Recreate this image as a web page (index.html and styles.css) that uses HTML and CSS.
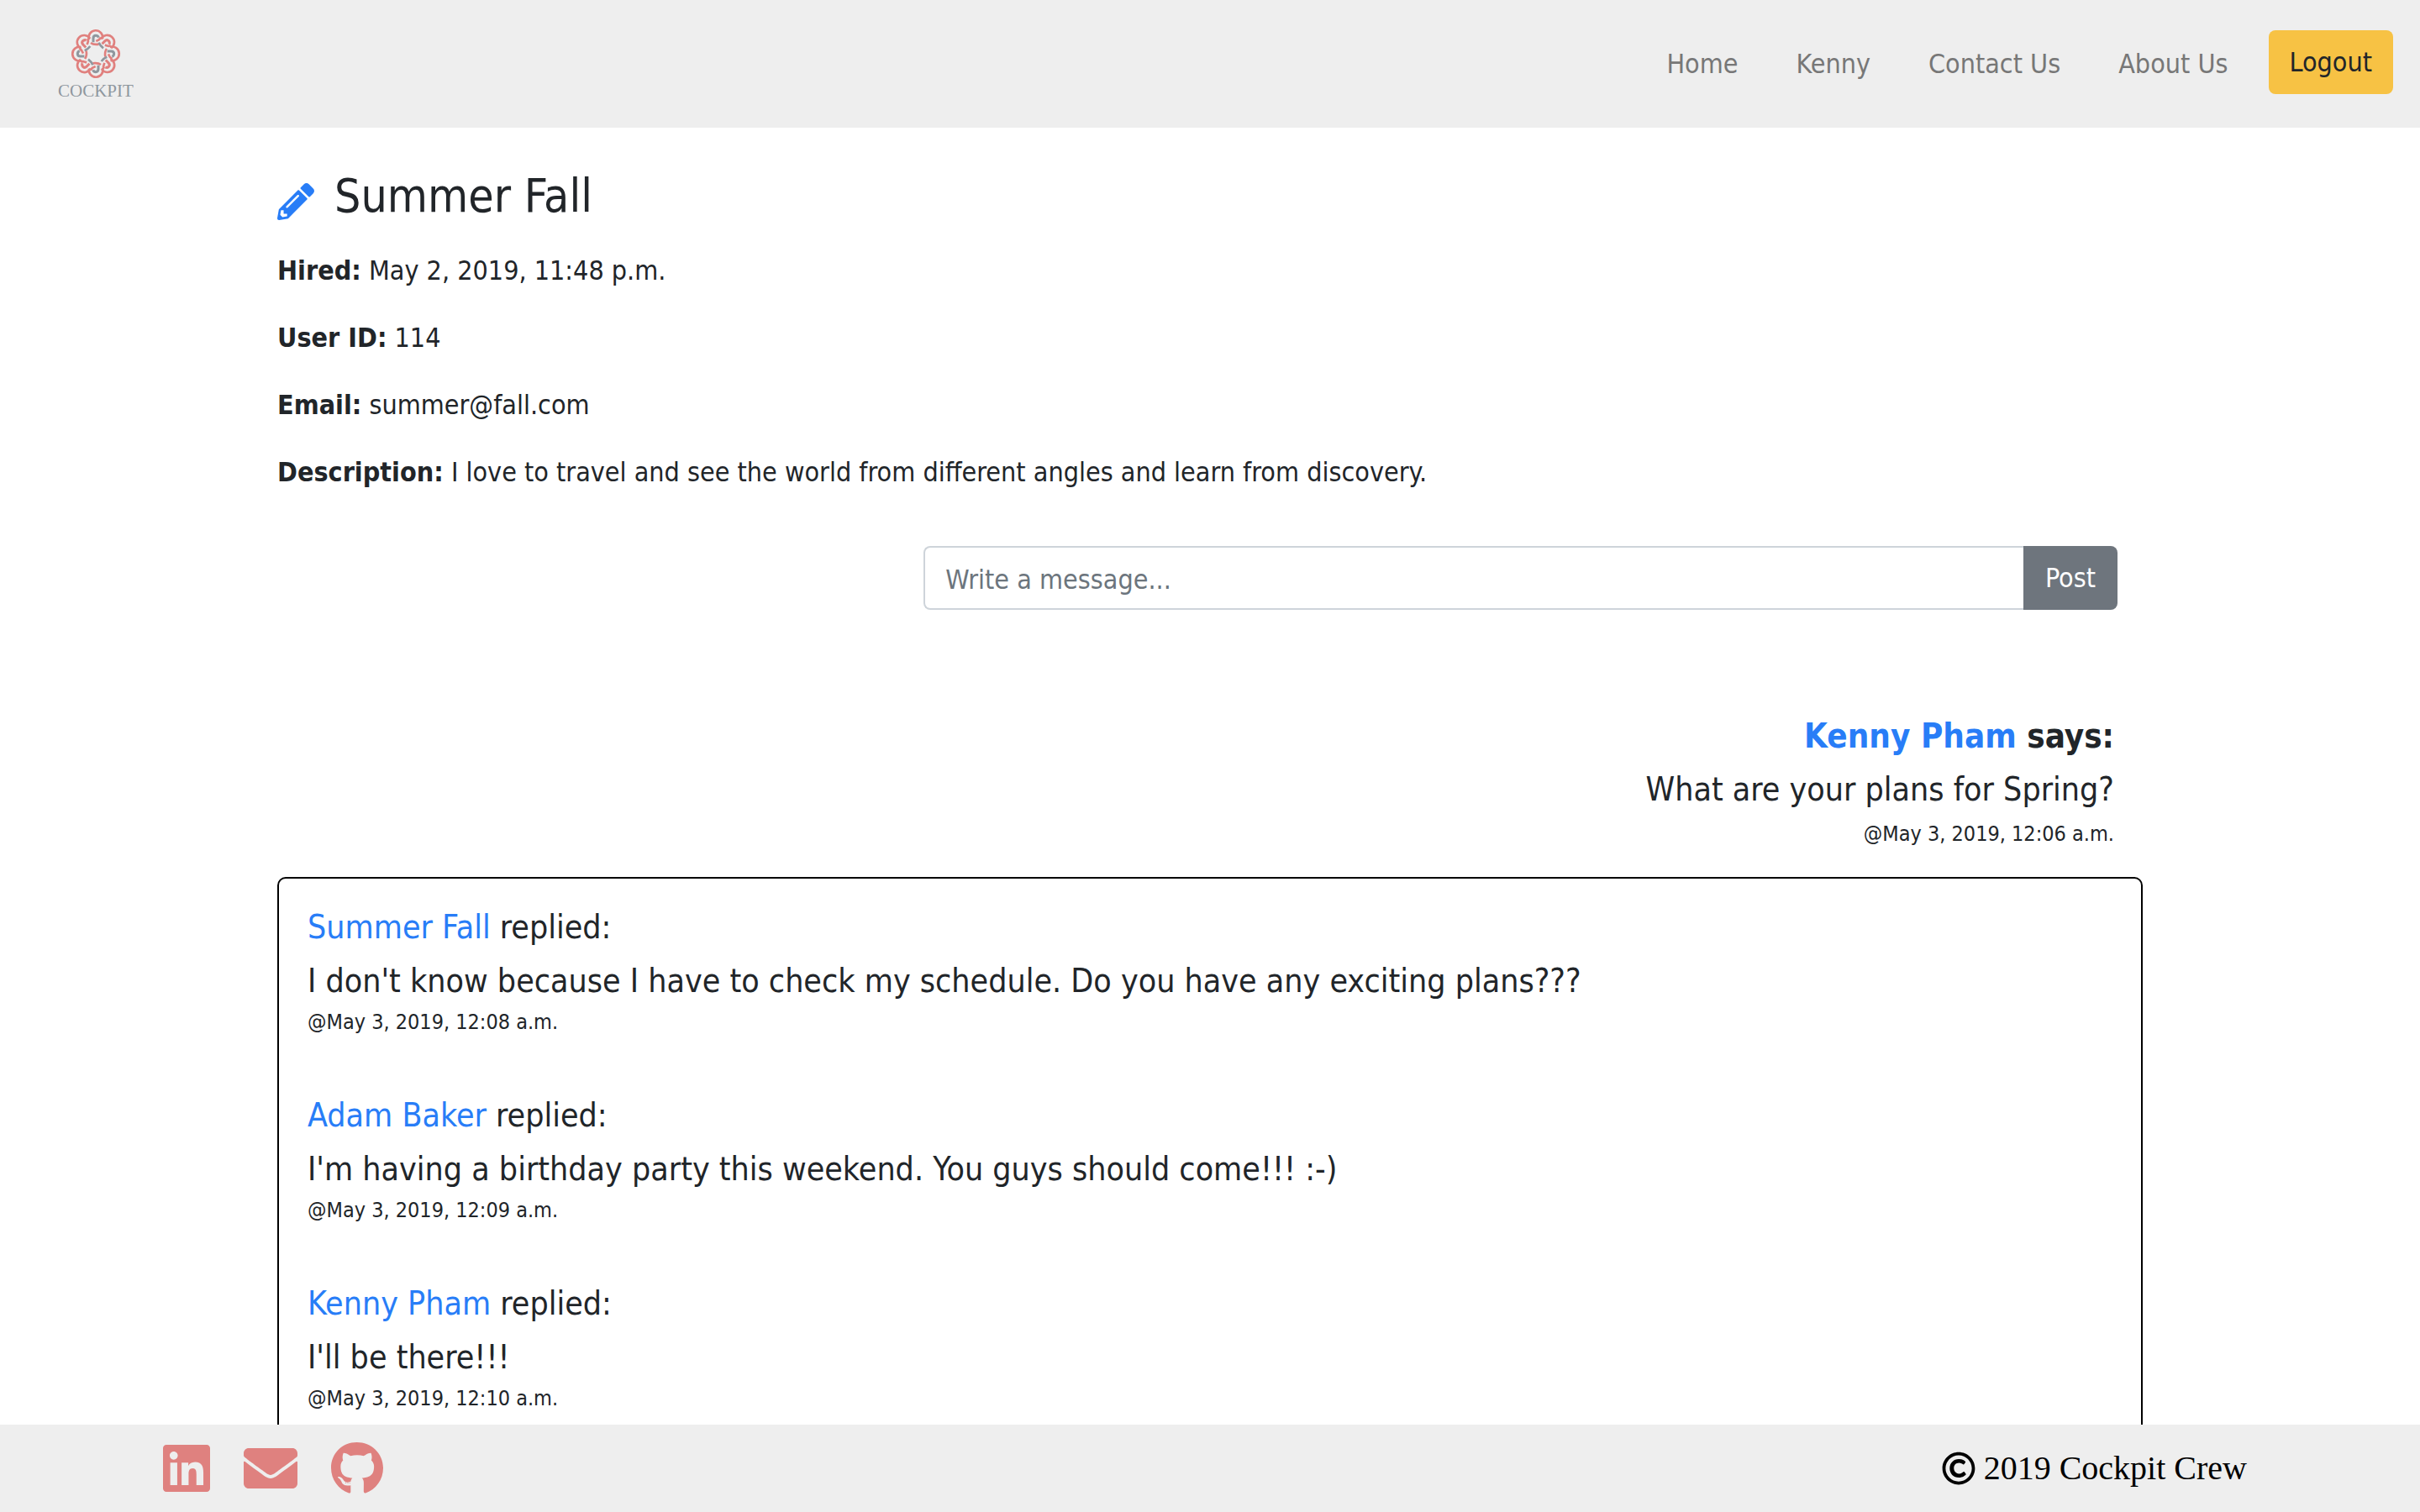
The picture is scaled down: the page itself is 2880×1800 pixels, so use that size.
FILE: index.html
```html
<!DOCTYPE html>
<html lang="en">
<head>
<meta charset="utf-8">
<title>Cockpit</title>
<link rel="stylesheet" href="styles.css">
</head>
<body>
<header class="navbar">
  <a class="brand" href="#">
    <svg class="brand-mark" viewBox="2 2 180 180" aria-hidden="true">
      <defs>
        <g id="lobe" fill="none" stroke="#e0807e" stroke-width="8">
          <path d="M68 42A25 25 0 1 1 116 39"/>
          <path d="M93 47L101 43Q108 40 108 33"/>
        </g>
        <path id="hook" d="M83 51V37Q83 27 92 27Q99 27 102 34" fill="none" stroke-width="9"/>
        <path id="ring" d="M74 53Q84 61 103 58" fill="none" stroke="#e0807e" stroke-width="8"/>
        <path id="bar" d="M103 52Q107 63 119 72" fill="none" stroke="#8f979e" stroke-width="8"/>
      </defs>
      <use href="#lobe"/>
      <use href="#lobe" transform="rotate(45 92 92)"/>
      <use href="#lobe" transform="rotate(90 92 92)"/>
      <use href="#lobe" transform="rotate(135 92 92)"/>
      <use href="#lobe" transform="rotate(180 92 92)"/>
      <use href="#lobe" transform="rotate(225 92 92)"/>
      <use href="#lobe" transform="rotate(270 92 92)"/>
      <use href="#lobe" transform="rotate(315 92 92)"/>
      <use href="#ring"/>
      <use href="#ring" transform="rotate(90 92 92)"/>
      <use href="#ring" transform="rotate(180 92 92)"/>
      <use href="#ring" transform="rotate(270 92 92)"/>
      <use href="#bar"/>
      <use href="#bar" transform="rotate(90 92 92)"/>
      <use href="#bar" transform="rotate(180 92 92)"/>
      <use href="#bar" transform="rotate(270 92 92)"/>
      <use href="#hook" stroke="#8f979e"/>
      <use href="#hook" stroke="#8f979e" transform="rotate(90 92 92)"/>
      <use href="#hook" stroke="#8f979e" transform="rotate(180 92 92)"/>
      <use href="#hook" stroke="#8f979e" transform="rotate(270 92 92)"/>
      <use href="#hook" stroke="#e0807e" transform="rotate(45 92 92)"/>
      <use href="#hook" stroke="#e0807e" transform="rotate(135 92 92)"/>
      <use href="#hook" stroke="#e0807e" transform="rotate(225 92 92)"/>
      <use href="#hook" stroke="#e0807e" transform="rotate(315 92 92)"/>
    </svg>
    <span class="brand-name">COCKPIT</span>
  </a>
  <nav class="nav">
    <a class="nav-link" href="#">Home</a>
    <a class="nav-link" href="#">Kenny</a>
    <a class="nav-link" href="#">Contact Us</a>
    <a class="nav-link" href="#">About Us</a>
    <button class="btn btn-warning" type="button">Logout</button>
  </nav>
</header>

<main class="container">
  <section class="profile">
    <h2 class="profile-name">
      <a class="edit" href="#" aria-label="Edit profile">
        <svg viewBox="0 0 512 512" aria-hidden="true"><path fill="currentColor" d="M497.900 142.100l-46.100 46.100c-4.700 4.700-12.300 4.700-17 0l-111-111c-4.700-4.700-4.700-12.300 0-17l46.100-46.100c18.700-18.700 49.100-18.700 67.900 0l60.100 60.100c18.800 18.700 18.800 49.100 0 67.900zM284.200 99.800L21.600 362.400.4 483.900c-2.900 16.400 11.400 30.600 27.800 27.800l121.500-21.300 262.600-262.600c4.700-4.700 4.700-12.300 0-17l-111-111c-4.800-4.700-12.400-4.700-17.100 0zM124.100 339.900c-5.500-5.500-5.500-14.300 0-19.800l154-154c5.500-5.500 14.300-5.500 19.800 0s5.500 14.300 0 19.800l-154 154c-5.500 5.500-14.300 5.500-19.800 0zM88 424h48v36.300l-64.500 11.300-31.100-31.100L51.700 376H88v48z"/></svg>
      </a>
      Summer Fall
    </h2>
    <p><strong>Hired:</strong> May 2, 2019, 11:48 p.m.</p>
    <p><strong>User ID:</strong> 114</p>
    <p><strong>Email:</strong> summer@fall.com</p>
    <p><strong>Description:</strong> I love to travel and see the world from different angles and learn from discovery.</p>
  </section>

  <form class="composer">
    <input class="composer-input" type="text" placeholder="Write a message..." aria-label="Write a message">
    <button class="btn btn-post" type="button">Post</button>
  </form>

  <article class="message">
    <p class="message-author"><a href="#">Kenny Pham</a> says:</p>
    <p>What are your plans for Spring?</p>
    <p class="stamp">@May 3, 2019, 12:06 a.m.</p>
  </article>

  <section class="replies">
    <article class="reply">
      <p><a href="#">Summer Fall</a> replied:</p>
      <p>I don't know because I have to check my schedule. Do you have any exciting plans???</p>
      <p class="stamp">@May 3, 2019, 12:08 a.m.</p>
    </article>
    <article class="reply">
      <p><a href="#">Adam Baker</a> replied:</p>
      <p>I'm having a birthday party this weekend. You guys should come!!! :-)</p>
      <p class="stamp">@May 3, 2019, 12:09 a.m.</p>
    </article>
    <article class="reply">
      <p><a href="#">Kenny Pham</a> replied:</p>
      <p>I'll be there!!!</p>
      <p class="stamp">@May 3, 2019, 12:10 a.m.</p>
    </article>
  </section>
</main>

<footer class="footer">
  <div class="social">
    <a href="#" aria-label="LinkedIn"><svg viewBox="0 0 448 512" aria-hidden="true"><path fill="currentColor" d="M416 32H31.900C14.300 32 0 46.500 0 64.300v383.400C0 465.500 14.300 480 31.900 480H416c17.600 0 32-14.500 32-32.300V64.300c0-17.800-14.400-32.300-32-32.300zM135.400 416H69V202.200h66.500V416zm-33.200-243c-21.300 0-38.500-17.300-38.500-38.500S80.900 96 102.200 96c21.200 0 38.500 17.300 38.500 38.500 0 21.300-17.200 38.500-38.500 38.500zm282.100 243h-66.400V312c0-24.800-.5-56.700-34.500-56.700-34.600 0-39.900 27-39.900 54.900V416h-66.400V202.200h63.700v29.200h.9c8.900-16.800 30.600-34.500 62.900-34.500 67.200 0 79.700 44.300 79.700 101.900V416z"/></svg></a>
    <a href="#" aria-label="Email"><svg viewBox="0 0 512 512" aria-hidden="true"><path fill="currentColor" d="M502.300 190.800c3.900-3.100 9.700-.2 9.700 4.700V400c0 26.500-21.500 48-48 48H48c-26.500 0-48-21.500-48-48V195.600c0-5 5.700-7.800 9.700-4.700 22.400 17.400 52.100 39.500 154.100 113.600 21.100 15.400 56.700 47.800 92.200 47.600 35.700.3 72-32.800 92.300-47.600 102-74.100 131.600-96.300 154-113.700zM256 320c23.200.4 56.600-29.200 73.400-41.400 132.700-96.300 142.800-104.700 173.400-128.700 5.800-4.500 9.200-11.500 9.200-18.900v-19c0-26.500-21.500-48-48-48H48c-26.500 0-48 21.500-48 48v19c0 7.400 3.400 14.300 9.200 18.900 30.600 23.900 40.700 32.400 173.400 128.700 16.800 12.200 50.200 41.800 73.400 41.400z"/></svg></a>
    <a href="#" aria-label="GitHub"><svg viewBox="0 0 496 512" aria-hidden="true"><path fill="currentColor" d="M165.900 397.400c0 2-2.300 3.600-5.200 3.600-3.300.3-5.600-1.300-5.600-3.600 0-2 2.300-3.600 5.200-3.600 3-.3 5.600 1.300 5.600 3.600zm-31.100-4.500c-.7 2 1.300 4.300 4.300 4.900 2.600 1 5.600 0 6.200-2s-1.300-4.300-4.300-5.200c-2.600-.7-5.500.3-6.200 2.300zm44.200-1.700c-2.900.7-4.900 2.600-4.600 4.900.3 2 2.900 3.300 5.900 2.600 2.900-.7 4.900-2.600 4.600-4.600-.3-1.900-3-3.200-5.900-2.900zM244.800 8C106.100 8 0 113.300 0 252c0 110.900 69.800 205.800 169.500 239.200 12.800 2.300 17.300-5.600 17.300-12.100 0-6.200-.3-40.400-.3-61.400 0 0-70 15-84.700-29.800 0 0-11.400-29.100-27.800-36.600 0 0-22.900-15.700 1.600-15.400 0 0 24.900 2 38.600 25.800 21.900 38.600 58.600 27.500 72.900 20.900 2.300-16 8.800-27.100 16-33.700-55.900-6.200-112.300-14.300-112.300-110.500 0-27.500 7.600-41.300 23.600-58.900-2.600-6.500-11.100-33.300 2.600-67.900 20.900-6.500 69 27 69 27 20-5.600 41.500-8.500 62.800-8.500s42.800 2.900 62.800 8.500c0 0 48.100-33.600 69-27 13.700 34.700 5.200 61.400 2.600 67.900 16 17.700 25.800 31.500 25.800 58.900 0 96.500-58.900 104.200-114.800 110.500 9.200 7.900 17 22.900 17 46.400 0 33.700-.3 75.400-.3 83.600 0 6.500 4.600 14.400 17.300 12.100C428.200 457.800 496 362.900 496 252 496 113.300 383.500 8 244.800 8z"/></svg></a>
  </div>
  <p class="copyright">
    <svg viewBox="0 0 512 512" role="img" aria-label="Copyright"><path fill="currentColor" d="M256 8C119.033 8 8 119.033 8 256s111.033 248 248 248 248-111.033 248-248S392.967 8 256 8zm0 448c-110.532 0-200-89.451-200-200 0-110.531 89.451-200 200-200 110.532 0 200 89.451 200 200 0 110.532-89.451 200-200 200zm107.351-101.064c-9.614 9.712-45.530 41.396-104.065 41.396-82.430 0-140.484-61.425-140.484-141.567 0-79.152 60.275-139.401 139.762-139.401 55.531 0 88.738 26.620 97.593 34.779a11.965 11.965 0 0 1 1.936 15.322l-18.155 28.113c-3.841 5.950-11.966 7.282-17.499 2.921-8.595-6.776-31.814-22.538-61.708-22.538-48.303 0-77.916 35.330-77.916 80.082 0 41.589 26.888 83.692 78.277 83.692 32.657 0 56.843-19.039 65.726-27.225 5.270-4.857 13.596-4.039 17.820 1.738l19.865 27.170a11.947 11.947 0 0 1-1.152 15.518z"/></svg>
    2019 Cockpit Crew
  </p>
</footer>
</body>
</html>
```
FILE: styles.css
```css
* {
  box-sizing: border-box;
}

html {
  height: 100%;
}

body {
  display: flex;
  flex-direction: column;
  height: 100%;
  margin: 0;
  overflow: hidden;
  background: #fff;
  color: #212529;
  font-family: Tahoma, "DejaVu Sans Condensed", "Noto Sans", sans-serif;
  font-size: 32px;
  line-height: 48px;
}

p,
h2 {
  margin: 0;
}

a {
  color: #287df7;
  text-decoration: none;
}

.navbar,
.footer {
  display: flex;
  flex: none;
  align-items: center;
  justify-content: space-between;
  background: #eee;
}

.navbar {
  height: 152px;
  padding: 0 32px 0 69px;
}

.brand {
  display: flex;
  flex-direction: column;
  align-items: center;
  gap: 2px;
  padding-top: 2px;
  color: #8f979e;
  font-family: "Liberation Serif", serif;
  font-size: 21px;
  line-height: 24px;
}

.brand-mark {
  width: 60px;
  height: 60px;
}

.nav {
  display: flex;
  align-items: center;
}

.nav-link {
  margin-right: 37px;
  padding: 0 16px;
  color: #777;
}

.btn {
  height: 76px;
  padding: 0 26px;
  border: 0;
  border-radius: 8px;
  font: inherit;
}

.btn-warning {
  margin: 0 0 4px -5px;
  padding: 0 25px;
  background: #f7c244;
  color: #212529;
}

.container {
  flex: 1;
  width: 100%;
  max-width: 2220px;
  min-height: 0;
  margin: 0 auto;
  padding-top: 48px;
}

.profile {
  display: flex;
  flex-direction: column;
  gap: 32px;
}

.profile-name {
  display: flex;
  gap: 24px;
  font-size: 55px;
  font-weight: 400;
  line-height: 66px;
}

.edit {
  display: flex;
  align-items: flex-end;
  padding-bottom: 4px;
}

.edit svg {
  width: 44px;
  height: 44px;
}

.composer {
  display: flex;
  width: 64%;
  margin: 64px 30px 0 auto;
}

.composer-input {
  flex: 1;
  min-width: 0;
  height: 76px;
  padding: 4px 24px 0;
  border: 2px solid #ced4da;
  border-right: 0;
  border-radius: 8px 0 0 8px;
  background: #fff;
  color: #495057;
  font: inherit;
}

.composer-input::placeholder {
  color: #6c757d;
  opacity: 1;
}

.btn-post {
  border-radius: 0 8px 8px 0;
  background: #6e757d;
  color: #fff;
}

.message,
.reply {
  font-size: 39px;
  line-height: 64px;
}

.message {
  padding: 118px 34px 34px;
  text-align: right;
}

.message-author {
  font-size: 40px;
  font-weight: 700;
}

.stamp {
  font-size: 25px;
  line-height: 34px;
}

.message .stamp {
  padding-top: 4px;
}

.replies {
  display: flex;
  flex-direction: column;
  gap: 62px;
  padding: 26px 34px 62px;
  border: 2px solid #000;
  border-radius: 10px;
}

.footer {
  position: relative;
  height: 104px;
  padding: 0 206px 0 194px;
}

.social {
  display: flex;
  gap: 40px;
}

.social a {
  display: flex;
  color: #df817f;
}

.social svg {
  height: 64px;
}

.copyright {
  display: flex;
  align-items: center;
  gap: 10px;
  color: #000;
  font-family: "Liberation Serif", serif;
  font-size: 40px;
}

.copyright svg {
  width: 40px;
  height: 40px;
}
```
